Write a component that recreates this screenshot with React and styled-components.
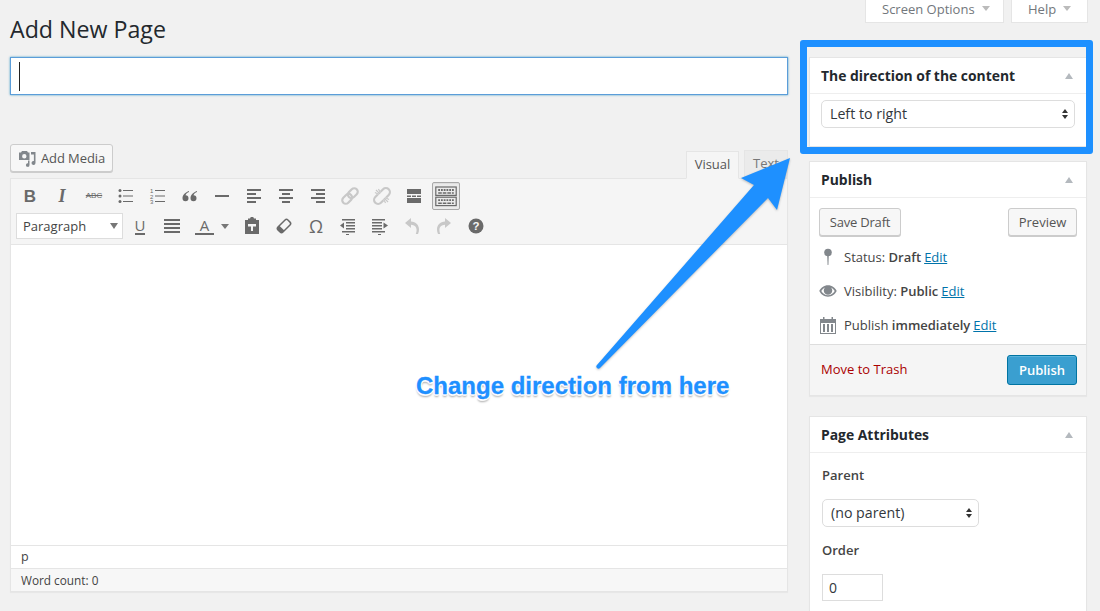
import React from "react";
import styled, { createGlobalStyle } from "styled-components";

const GlobalStyle = createGlobalStyle`
  html, body {
    margin: 0;
    padding: 0;
    background: #f1f1f1;
    overflow: hidden;
  }
  body {
    font-family: "Open Sans", "Liberation Sans", sans-serif;
    font-size: 13px;
    color: #444;
  }
  * {
    box-sizing: border-box;
  }
`;

const Page = styled.div`
  position: relative;
  width: 1100px;
  height: 611px;
  overflow: hidden;
  padding-left: 10px;
  display: grid;
  grid-template-columns: 778px 279px;
  column-gap: 21px;
  align-items: start;
`;

const Main = styled.div`
  display: flex;
  flex-direction: column;
`;

const Title = styled.h1`
  margin: 0;
  height: 57px;
  padding-top: 12px;
  font-size: 23.2px;
  line-height: 34px;
  font-weight: 400;
  color: #23282d;
`;

const TitleInput = styled.div`
  height: 38px;
  background: #fff;
  border: 1px solid #5b9dd9;
  box-shadow: 0 0 2px rgba(30, 140, 190, 0.8);
  display: flex;
  align-items: center;
  padding-left: 8px;
`;

const Caret = styled.span`
  width: 1px;
  height: 29px;
  background: #222;
`;

const MediaRow = styled.div`
  margin-top: 49px;
  height: 34px;
  display: flex;
  justify-content: space-between;
`;

const Button = styled.button`
  width: ${(p) => p.$w}px;
  height: 28px;
  padding: 0;
  display: inline-flex;
  align-items: center;
  justify-content: center;
  white-space: nowrap;
  letter-spacing: ${(p) => p.$ls || 0}px;
  background: #f7f7f7;
  border: 1px solid #ccc;
  border-radius: 3px;
  box-shadow: 0 1px 0 #ccc;
  color: #555;
  font: 400 13px "Open Sans", sans-serif;
`;

const MediaButton = styled(Button)`
  justify-content: flex-start;
  gap: 4px;
  padding-left: 6px;
`;

const Tabs = styled.div`
  display: flex;
  align-items: flex-end;
  gap: 5px;
`;

const Tab = styled.div`
  height: 28px;
  margin-bottom: ${(p) => (p.$active ? -1 : 0)}px;
  position: relative;
  width: ${(p) => p.$w}px;
  display: flex;
  align-items: center;
  justify-content: center;
  padding-bottom: 3px;
  border: 1px solid #e5e5e5;
  border-bottom: ${(p) => (p.$active ? "1px solid #f5f5f5" : "1px solid #e5e5e5")};
  background: ${(p) => (p.$active ? "#f5f5f5" : "#ebebeb")};
  color: ${(p) => (p.$active ? "#555" : "#777")};
`;

const Editor = styled.div`
  height: 414px;
  display: flex;
  flex-direction: column;
  border: 1px solid #e5e5e5;
  background: #fff;
  box-shadow: 0 1px 1px rgba(0, 0, 0, 0.04);
`;

const Toolbar = styled.div`
  height: 66px;
  padding: 3px 5px 0;
  background: #f5f5f5;
  border-bottom: 1px solid #e5e5e5;
  display: flex;
  flex-direction: column;
  gap: 2px;
`;

const ToolRow = styled.div`
  display: flex;
  align-items: center;
  gap: 4px;
`;

const Tool = styled.div`
  flex: none;
  width: ${(p) => p.$w || 28}px;
  height: 28px;
  display: flex;
  align-items: center;
  justify-content: center;
  gap: 7px;
  color: ${(p) => (p.$off ? "#c8c8c8" : "#6a6a6a")};
  border: 1px solid ${(p) => (p.$on ? "#a8a8a8" : "transparent")};
  border-radius: 2px;
  background: ${(p) => (p.$on ? "#ebebeb" : "transparent")};
  box-shadow: ${(p) => (p.$on ? "inset 0 1px 1px #ddd" : "none")};
`;

const Glyph = styled.span`
  font: ${(p) => p.$style || "normal"} ${(p) => p.$weight || 700} ${(p) => p.$size || 18}px/1
    ${(p) => p.$family || '"Liberation Sans"'}, sans-serif;
  color: #6a6a6a;
  ${(p) => p.$strike && "text-decoration: line-through;"}
`;

const UnderGlyph = styled.span`
  font: 400 15px/15px "Open Sans", sans-serif;
  color: #6a6a6a;
  border-bottom: 2px solid #6a6a6a;
  padding: 0 ${(p) => p.$pad || 0}px;
  display: block;
`;

const FormatSelect = styled.div`
  width: 107px;
  height: 26px;
  flex: none;
  margin-right: -1px;
  background: #fff;
  border: 1px solid #ddd;
  display: flex;
  align-items: center;
  justify-content: space-between;
  padding: 0 4px 0 6px;
  color: #444;
`;

const Arrow = styled.span`
  width: 0;
  height: 0;
  flex: none;
  border-left: ${(p) => p.$s || 4}px solid transparent;
  border-right: ${(p) => p.$s || 4}px solid transparent;
  ${(p) => (p.$up ? "border-bottom" : "border-top")}: ${(p) => p.$h || 5}px solid ${(p) => p.$c || "#777"};
`;

const Content = styled.div`
  flex: 1;
  background: #fff;
`;

const PathBar = styled.div`
  height: 23px;
  border-top: 1px solid #e5e5e5;
  background: #fff;
  padding-left: 10px;
  line-height: 22px;
  font-size: 12.5px;
  color: #444;
`;

const CountBar = styled.div`
  height: 23px;
  border-top: 1px solid #e5e5e5;
  background: #f7f7f7;
  padding-left: 10px;
  line-height: 22px;
  font-size: 11.8px;
  color: #444;
`;

const Side = styled.div`
  display: flex;
  flex-direction: column;
`;

const ScreenTabs = styled.div`
  height: 23px;
  margin-bottom: 34px;
  display: flex;
  justify-content: flex-end;
  gap: 7px;
`;

const ScreenTab = styled.div`
  width: ${(p) => p.$w}px;
  height: 23px;
  background: #fff;
  border: 1px solid #e5e5e5;
  border-top: 0;
  display: flex;
  align-items: center;
  gap: 7px;
  color: #72777c;
  padding: 0 0 5px 16px;
`;

const Box = styled.section`
  width: 278px;
  height: ${(p) => p.$h}px;
  margin-bottom: ${(p) => p.$mb || 0}px;
  background: #fff;
  border: 1px solid #e5e5e5;
  box-shadow: 0 1px 1px rgba(0, 0, 0, 0.04);
  display: flex;
  flex-direction: column;
`;

const BoxHead = styled.div`
  height: 36px;
  flex: none;
  border-bottom: 1px solid #eee;
  display: flex;
  align-items: center;
  justify-content: space-between;
  padding: 0 13px 0 11px;
  font-size: 13.9px;
  font-weight: 700;
  color: #23282d;
`;

const BoxBody = styled.div`
  padding: ${(p) => p.$pad || "6px 11px"};
  flex: 1;
`;

const Select = styled.div`
  width: ${(p) => p.$w}px;
  height: 28px;
  background: #fff;
  border: 1px solid #ddd;
  border-radius: 5px;
  display: flex;
  align-items: center;
  justify-content: space-between;
  padding: 0 6px 2px 8px;
  font-size: 14.2px;
  color: #32373c;
`;

const Spinner = styled.span`
  display: flex;
  flex-direction: column;
  align-items: center;
  gap: 2px;
  margin-top: 2px;
`;

const ButtonRow = styled.div`
  display: flex;
  justify-content: space-between;
  padding: 10px 9px 0;
`;

const MetaList = styled.div`
  padding: 11px 0 0 9px;
  display: flex;
  flex-direction: column;
  gap: 14px;
`;

const MetaRow = styled.div`
  height: 20px;
  display: flex;
  align-items: center;
  gap: 7px;
  color: #444;
  font-size: 13px;
`;

const MetaIcon = styled.span`
  width: 18px;
  display: flex;
  justify-content: center;
`;

const MetaValue = styled.strong`
  font-weight: 600;
`;

const EditLink = styled.a`
  color: #0073aa;
  text-decoration: underline;
  margin-left: 3px;
`;

const Actions = styled.div`
  margin-top: 9px;
  height: 51px;
  border-top: 1px solid #ddd;
  background: #f5f5f5;
  display: flex;
  align-items: center;
  justify-content: space-between;
  padding: 0 9px 0 11px;
`;

const TrashLink = styled.a`
  color: #a00;
  padding-bottom: 2px;
`;

const PublishButton = styled.button`
  width: 70px;
  height: 30px;
  background: #3a9fd0;
  border: 1px solid #0074a2;
  border-radius: 3px;
  color: #fff;
  font: 600 13px "Open Sans", sans-serif;
  box-shadow: inset 0 1px 0 rgba(120, 200, 230, 0.5);
`;

const FieldLabel = styled.div`
  font-weight: 600;
  font-size: 13px;
  color: #444;
  line-height: 18px;
  margin: ${(p) => p.$m};
`;

const NumberInput = styled.div`
  width: 61px;
  height: 27px;
  background: #fff;
  border: 1px solid #ddd;
  padding-left: 6px;
  line-height: 25px;
  font-size: 14px;
  color: #32373c;
`;

const Highlight = styled.div`
  position: absolute;
  left: 800px;
  top: 40px;
  width: 293px;
  height: 114px;
  border: 7px solid #1e90ff;
  border-radius: 3px;
  pointer-events: none;
`;

const ArrowLayer = styled.svg`
  position: absolute;
  left: 0;
  top: 0;
  pointer-events: none;
  filter: drop-shadow(0 1px 1px rgba(0, 0, 0, 0.25));
`;

const Callout = styled.div`
  position: absolute;
  left: 416px;
  top: 371px;
  font: 700 24px/30px "Liberation Sans", Arial, sans-serif;
  -webkit-text-stroke: 0.3px #1e90ff;
  color: #1e90ff;
  white-space: nowrap;
  text-shadow: 1px 0 0 #fff, -1px 0 0 #fff, 0 -1px 0 #fff, 1px 1px 0 #fff, -1px 1px 0 #fff,
    0 2px 1px #fff, 0 3px 2px rgba(0, 0, 0, 0.35);
`;

const C = "#6a6a6a";
const Off = "#c8c8c8";

const Icon = ({ size = 20, children, fill = C }) => (
  <svg width={size} height={size} viewBox="0 0 20 20" fill={fill}>
    {children}
  </svg>
);

const Lines = ({ rows, fill = C }) =>
  rows.map(([x, y, w, h = 2], i) => <rect key={i} x={x} y={y} width={w} height={h} fill={fill} />);

const BulletIcon = () => (
  <Icon>
    <circle cx="4" cy="4.500" r="1.500" />
    <circle cx="4" cy="10" r="1.500" />
    <circle cx="4" cy="15.500" r="1.500" />
    <Lines rows={[[7, 4, 10, 1], [7, 9.500, 10, 1], [7, 15, 10, 1]]} />
  </Icon>
);

const NumberedIcon = () => (
  <Icon>
    <text x="2" y="7" fontSize="6" fontFamily="Liberation Sans">1</text>
    <text x="2" y="12.500" fontSize="6" fontFamily="Liberation Sans">2</text>
    <text x="2" y="18" fontSize="6" fontFamily="Liberation Sans">3</text>
    <Lines rows={[[7, 4, 10, 1], [7, 9.500, 10, 1], [7, 15, 10, 1]]} />
  </Icon>
);

const QuoteIcon = () => (
  <Icon>
    <path d="M9 5C5.500 6.200 2.500 8.800 2.500 12.200a3 3 0 1 0 3-3c.4-1.400 1.800-2.600 3.500-3.200z" />
    <path d="M17 5c-3.500 1.200-6.500 3.800-6.500 7.200a3 3 0 1 0 3-3c.4-1.400 1.800-2.600 3.500-3.200z" />
  </Icon>
);

const AlignIcon = ({ rows }) => (
  <Icon>
    <Lines rows={rows} />
  </Icon>
);

const LinkIcon = () => (
  <Icon fill="none">
    <g stroke={Off} strokeWidth="2.200" transform="rotate(-45 10 10)">
      <rect x="0.500" y="6.500" width="11" height="7" rx="3.500" />
      <rect x="8.500" y="6.500" width="11" height="7" rx="3.500" />
    </g>
  </Icon>
);

const UnlinkIcon = () => (
  <Icon fill="none">
    <g stroke={Off} transform="rotate(-45 10 10)">
      <path d="M8 6H4.500a4 4 0 0 0 0 8H8" strokeWidth="2.200" />
      <path d="M12 6h3.500a4 4 0 0 1 0 8H12" strokeWidth="2.200" />
      <path d="M10 1.500V7M10 13v5.500M7.500 2.500 9 7M12.500 2.500 11 7M7.500 17.500 9 13M12.500 17.500 11 13" strokeWidth="1.200" />
    </g>
  </Icon>
);

const MoreIcon = () => (
  <Icon>
    <rect x="3" y="3" width="14" height="5" />
    <rect x="3" y="9.500" width="4" height="1.500" />
    <rect x="8" y="9.500" width="4" height="1.500" />
    <rect x="13" y="9.500" width="4" height="1.500" />
    <rect x="3" y="12" width="14" height="5" />
  </Icon>
);

const KeyRow = ({ y }) => (
  <>
    <rect x="1.500" y={y + 0.5} width="17" height="7" fill="none" stroke={C} />
    <path d={`M3.500 ${y + 3}h13`} stroke={C} strokeWidth="1.500" strokeDasharray="1.500 .8" />
    <path d={`M3.500 ${y + 5.5}h13`} stroke={C} strokeWidth="1.200" strokeDasharray="3 .8" />
  </>
);

const KitchenIcon = () => (
  <Icon size={24}>
    <KeyRow y={2} />
    <KeyRow y={10.500} />
  </Icon>
);

const JustifyIcon = () => (
  <AlignIcon rows={[[2, 3, 16], [2, 7, 16], [2, 11, 16], [2, 15, 16]]} />
);

const PasteIcon = () => (
  <Icon>
    <path
      fillRule="evenodd"
      d="M3 4h3V2.500h2L8.800 1h2.400L12 2.500h2V4h3v14H3zM6 8v2.500h3V15h2v-4.500h3V8z"
    />
  </Icon>
);

const EraserIcon = () => (
  <Icon fill="none">
    <g transform="rotate(45 10 10)">
      <rect x="6.500" y="3" width="7" height="14" rx="2" stroke={C} strokeWidth="1.500" fill="#f5f5f5" />
      <path d="M6.500 13h7v2a2 2 0 0 1-2 2h-3a2 2 0 0 1-2-2z" fill={C} />
    </g>
  </Icon>
);

const OutdentIcon = () => (
  <Icon>
    <Lines
      rows={[
        [4, 3, 13, 1.500],
        [8, 6, 9, 1.500],
        [8, 9, 9, 1.500],
        [8, 12, 9, 1.500],
        [4, 15, 13, 1.500],
        [8, 18, 3, 1],
      ]}
    />
    <path d="M2 9.500 6 6.500v6z" />
  </Icon>
);

const IndentIcon = () => (
  <Icon>
    <Lines
      rows={[
        [2, 3, 13, 1.500],
        [2, 6, 10, 1.500],
        [2, 9, 10, 1.500],
        [2, 12, 10, 1.500],
        [2, 15, 13, 1.500],
        [8, 18, 3, 1],
      ]}
    />
    <path d="M18 9.500 13.500 6.500v6z" />
  </Icon>
);

const UndoIcon = ({ flip }) => (
  <Icon fill={Off}>
    <g transform={flip ? "matrix(-1 0 0 1 20 0)" : undefined}>
      <path d="M3 7 9 2v3.500c5 .2 8 3.500 8 8 0 1.500-.3 3-1 4.500h-2.200c.5-1.500.8-2.800.8-4 0-3-2-5-5.600-5.200V12z" />
    </g>
  </Icon>
);

const HelpIcon = () => (
  <Icon>
    <circle cx="10" cy="10" r="7.500" />
    <text x="10" y="14" textAnchor="middle" fontSize="11.500" fontWeight="700" fill="#f5f5f5" fontFamily="Liberation Sans">
      ?
    </text>
  </Icon>
);

const MediaIcon = () => (
  <svg width="20" height="20" viewBox="0 0 20 20" fill="#82878c">
    <path
      fillRule="evenodd"
      d="M2 4.500h2L5 3h5l1 1.500h1.500V12H2zM7.300 6a2.200 2.200 0 1 0 0 4.400 2.200 2.200 0 0 0 0-4.400z"
    />
    <path d="M14 4h4.500v11a2 2 0 1 1-1.600-2V6.500H14zM11 12.500h1.500V17a1.800 1.800 0 1 1-1.500-1.700z" />
  </svg>
);

const PinIcon = () => (
  <svg width="12" height="18" viewBox="0 0 12 18" fill="#82878c">
    <circle cx="6" cy="4.500" r="3.800" />
    <path d="M5.200 7h1.600L6.400 17h-.8z" />
  </svg>
);

const EyeIcon = () => (
  <svg width="18" height="14" viewBox="0 0 19 14" fill="#82878c">
    <path
      fillRule="evenodd"
      d="M9.500 1C5.200 1 2 3.800.3 7c1.700 3.200 4.900 6 9.200 6s7.500-2.800 9.200-6C17 3.800 13.800 1 9.500 1zM2.400 7c1-1.600 2.300-2.900 3.900-3.700a4.500 4.500 0 1 0 6.400 0c1.600.8 2.900 2.100 3.900 3.700-1.600 2.500-4 4.500-7.100 4.500S4 9.500 2.400 7z"
    />
  </svg>
);

const CalendarIcon = () => (
  <svg width="16" height="17" viewBox="0 0 16 17" fill="#82878c">
    <path fillRule="evenodd" d="M0 2h3V0h1.500v2h7V0H13v2h3v15H0zM1 6v10h14V6z" />
    <rect x="3" y="7" width="2" height="8" />
    <rect x="7" y="7" width="2" height="8" />
    <rect x="11" y="7" width="2" height="8" />
  </svg>
);

const SelectArrows = () => (
  <Spinner>
    <Arrow $up $s={3.500} $h={4} $c="#333" />
    <Arrow $s={3.500} $h={4} $c="#333" />
  </Spinner>
);

function App() {
  return (
    <Page>
      <GlobalStyle />
      <Main>
        <Title>Add New Page</Title>
        <TitleInput>
          <Caret />
        </TitleInput>
        <MediaRow>
          <MediaButton $w={103} $ls={-0.1}>
            <MediaIcon />
            Add Media
          </MediaButton>
          <Tabs>
            <Tab $w={53} $active>Visual</Tab>
            <Tab $w={44}>Text</Tab>
          </Tabs>
        </MediaRow>
        <Editor>
          <Toolbar>
            <ToolRow>
              <Tool><Glyph $size={17}>B</Glyph></Tool>
              <Tool><Glyph $size={18} $style="italic" $family='"Liberation Serif"'>I</Glyph></Tool>
              <Tool><Glyph $size={8} $weight={400} $strike>ABC</Glyph></Tool>
              <Tool><BulletIcon /></Tool>
              <Tool><NumberedIcon /></Tool>
              <Tool><QuoteIcon /></Tool>
              <Tool><Icon><rect x="3" y="9" width="14" height="2" /></Icon></Tool>
              <Tool><AlignIcon rows={[[3, 3, 14], [3, 7, 9], [3, 11, 14], [3, 15, 9]]} /></Tool>
              <Tool><AlignIcon rows={[[3, 3, 14], [6, 7, 8], [3, 11, 14], [6, 15, 8]]} /></Tool>
              <Tool><AlignIcon rows={[[3, 3, 14], [8, 7, 9], [3, 11, 14], [8, 15, 9]]} /></Tool>
              <Tool $off><LinkIcon /></Tool>
              <Tool $off><UnlinkIcon /></Tool>
              <Tool><MoreIcon /></Tool>
              <Tool $on><KitchenIcon /></Tool>
            </ToolRow>
            <ToolRow>
              <FormatSelect>
                Paragraph
                <Arrow $s={4.500} $h={6} />
              </FormatSelect>
              <Tool><UnderGlyph>U</UnderGlyph></Tool>
              <Tool><JustifyIcon /></Tool>
              <Tool $w={44}>
                <UnderGlyph $pad={5}>A</UnderGlyph>
                <Arrow $s={4} $h={5} />
              </Tool>
              <Tool><PasteIcon /></Tool>
              <Tool><EraserIcon /></Tool>
              <Tool><Glyph $size={18} $weight={400} $family='"Open Sans"'>Ω</Glyph></Tool>
              <Tool><OutdentIcon /></Tool>
              <Tool><IndentIcon /></Tool>
              <Tool $off><UndoIcon /></Tool>
              <Tool $off><UndoIcon flip /></Tool>
              <Tool><HelpIcon /></Tool>
            </ToolRow>
          </Toolbar>
          <Content />
          <PathBar>p</PathBar>
          <CountBar>Word count: 0</CountBar>
        </Editor>
      </Main>

      <Side>
        <ScreenTabs>
          <ScreenTab $w={139}>
            Screen Options
            <Arrow $s={4} $h={5} $c="#bbb" />
          </ScreenTab>
          <ScreenTab $w={77}>
            Help
            <Arrow $s={4} $h={5} $c="#bbb" />
          </ScreenTab>
        </ScreenTabs>

        <Box $h={90} $mb={14}>
          <BoxHead>
            The direction of the content
            <Arrow $up $s={4} $h={6} $c="#b4b9be" />
          </BoxHead>
          <BoxBody>
            <Select $w={254}>
              Left to right
              <SelectArrows />
            </Select>
          </BoxBody>
        </Box>

        <Box $h={235} $mb={20}>
          <BoxHead>
            Publish
            <Arrow $up $s={4} $h={6} $c="#b4b9be" />
          </BoxHead>
          <ButtonRow>
            <Button $w={82} $ls={-0.2}>Save Draft</Button>
            <Button $w={69}>Preview</Button>
          </ButtonRow>
          <MetaList>
            <MetaRow>
              <MetaIcon><PinIcon /></MetaIcon>
              <span>Status: <MetaValue>Draft</MetaValue><EditLink>Edit</EditLink></span>
            </MetaRow>
            <MetaRow>
              <MetaIcon><EyeIcon /></MetaIcon>
              <span>Visibility: <MetaValue>Public</MetaValue><EditLink>Edit</EditLink></span>
            </MetaRow>
            <MetaRow>
              <MetaIcon><CalendarIcon /></MetaIcon>
              <span>Publish <MetaValue>immediately</MetaValue><EditLink>Edit</EditLink></span>
            </MetaRow>
          </MetaList>
          <Actions>
            <TrashLink>Move to Trash</TrashLink>
            <PublishButton>Publish</PublishButton>
          </Actions>
        </Box>

        <Box $h={220}>
          <BoxHead>
            Page Attributes
            <Arrow $up $s={4} $h={6} $c="#b4b9be" />
          </BoxHead>
          <BoxBody $pad="13px 12px 0">
            <FieldLabel $m="0 0 15px">Parent</FieldLabel>
            <Select $w={157}>
              (no parent)
              <SelectArrows />
            </Select>
            <FieldLabel $m="14px 0 15px">Order</FieldLabel>
            <NumberInput>0</NumberInput>
          </BoxBody>
        </Box>
      </Side>

      <Highlight />
      <ArrowLayer width="1100" height="611" viewBox="0 0 1100 611">
        <path
          d="M790 158 741 178 754 185 597 365a2 2 0 0 0 3 3L768 198 777 210z"
          fill="#1e90ff"
        />
      </ArrowLayer>
      <Callout>Change direction from here</Callout>
    </Page>
  );
}

export default App;
